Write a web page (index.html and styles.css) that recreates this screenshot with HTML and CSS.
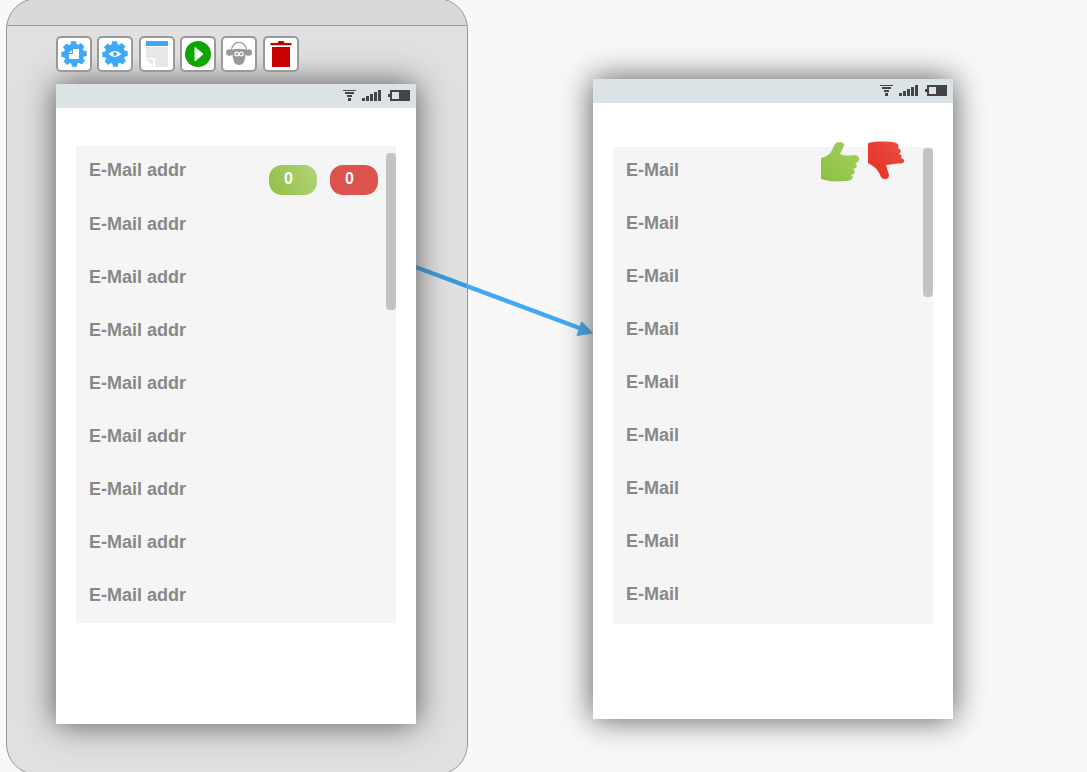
FILE: index.html
```html
<!DOCTYPE html>
<html lang="en">
<head>
<meta charset="utf-8">
<title>Screen flow editor</title>
<link rel="stylesheet" href="styles.css">
</head>
<body>
<svg width="0" height="0" class="defs">
  <defs>
    <linearGradient id="leaf" x1="0" y1="1" x2="1" y2="0"><stop offset="0" stop-color="#8cc044"/><stop offset="1" stop-color="#a2d05c"/></linearGradient>
    <linearGradient id="coral" x1="0" y1="1" x2="1" y2="0"><stop offset="0" stop-color="#e82c20"/><stop offset="1" stop-color="#ea5044"/></linearGradient>
    <symbol id="gear" viewBox="-13 -13 26 26">
      <circle r="10.2"/>
      <path d="M-3-12.7H2L3-8H-3.5z"/><path d="M-3-12.7H2L3-8H-3.5z" transform="rotate(45)"/><path d="M-3-12.7H2L3-8H-3.5z" transform="rotate(90)"/><path d="M-3-12.7H2L3-8H-3.5z" transform="rotate(135)"/><path d="M-3-12.7H2L3-8H-3.5z" transform="rotate(180)"/><path d="M-3-12.7H2L3-8H-3.5z" transform="rotate(225)"/><path d="M-3-12.7H2L3-8H-3.5z" transform="rotate(270)"/><path d="M-3-12.7H2L3-8H-3.5z" transform="rotate(315)"/>
    </symbol>
    <symbol id="status" viewBox="0 0 68 12">
      <path d="M0 0h13v1H0zM2 2h9v2H2zM4 5h5v2H4zM5 8h3v3H5z"/>
      <path d="M19 8h3v3h-3zM23 6h3v5h-3zM27 4h3v7h-3zM31 2h3v9h-3zM35 0h3v11h-3z"/>
      <path fill-rule="evenodd" d="M47 0h20v11H47V7h-2V4h2zM49 2v7h7V2z"/>
    </symbol>
  </defs>
</svg>
<main class="canvas">
  <svg class="link" width="1087" height="772">
    <path d="M410 265L582 329" stroke="#3fa9f5" stroke-width="4.400"/>
    <path d="M593.500 333.500L581.500 321L576.500 336z" fill="#3fa9f5"/>
  </svg>

  <section class="device">
    <div class="device-head"></div>
  </section>

  <article class="phone phone-source">
    <header class="status"><svg width="68" height="12"><use href="#status" width="68" height="12"/></svg></header>
    <div class="list">
      <ul>
        <li>E-Mail addr</li><li>E-Mail addr</li><li>E-Mail addr</li><li>E-Mail addr</li><li>E-Mail addr</li><li>E-Mail addr</li><li>E-Mail addr</li><li>E-Mail addr</li><li>E-Mail addr</li>
      </ul>
      <div class="votes"><span class="vote up">0</span><span class="vote down">0</span></div>
      <div class="scrollbar"></div>
    </div>
  </article>

  <nav class="toolbar">
    <button class="tool"><svg width="28" height="28" viewBox="-14 -14 28 28"><use href="#gear" x="-13" y="-13" width="26" height="26" fill="#3fa9f5"/><path d="M-1-5H5V5H-5V0H-1z" fill="#fff"/><path d="M-5-1L-2-4V-1z" fill="#fff"/></svg></button>
    <button class="tool"><svg width="28" height="28" viewBox="-14 -14 28 28"><use href="#gear" x="-13" y="-13" width="26" height="26" fill="#3fa9f5"/><path d="M-6.500 0Q0-6 6.500 0Q0 6-6.500 0z" fill="#fff"/><circle r="1.900" fill="#3fa9f5"/></svg></button>
    <button class="tool tool-page"><svg width="28" height="28"><path d="M3 1h22v5H3z" fill="#3fa9f5"/><path d="M3 7h22v20H12V18H3zM3 19l7 7v-7z" fill="#e9e7e8"/></svg></button>
    <button class="tool"><svg width="28" height="28"><circle cx="14" cy="14" r="13" fill="#0ba800"/><path d="M11 7.500L19 14L11 21z" fill="#fff" stroke="#fff" stroke-linejoin="round"/></svg></button>
    <button class="tool"><svg width="28" height="28" fill="#999896"><path d="M6.500 11C6.500 -.5 21.500 -.5 21.500 11" fill="none" stroke="#999896" stroke-width="1.200"/><ellipse cx="4.500" cy="12.500" rx="3.500" ry="3.300"/><ellipse cx="23.500" cy="12.500" rx="3.500" ry="3.300"/><path d="M6 10Q14 7.500 22 10L20.500 15Q20 25 14 25T7.500 15z"/><g fill="#999896" stroke="#fff" stroke-width="1.200"><circle cx="11.700" cy="14" r="1.900"/><circle cx="16.300" cy="14" r="1.900"/></g></svg></button>
    <button class="tool tool-trash"><svg width="28" height="28" fill="#c80000"><path d="M3.500 3h7l1-2h5l1 2h7v2.200h-21zM5 7h18v20H5z"/></svg></button>
  </nav>

  <article class="phone phone-target">
    <header class="status"><svg width="68" height="12"><use href="#status" width="68" height="12"/></svg></header>
    <div class="list">
      <ul>
        <li>E-Mail</li><li>E-Mail</li><li>E-Mail</li><li>E-Mail</li><li>E-Mail</li><li>E-Mail</li><li>E-Mail</li><li>E-Mail</li><li>E-Mail</li>
      </ul>
      <svg class="thumbs" width="86" height="42">
        <path d="M1 17C6 16 9 14 11 11L15 3Q16 1 19 1Q25 1 24 5L20 13Q24 15 30 14.500L35 14Q40 15 39 19Q38 22 35 22Q38 24 36 27L33 28Q36 30 34 33L31 34Q34 35 32 38Q30 40 25 40Q13 41 7 39.500L1 38z" fill="url(#leaf)"/>
        <path d="M48 2.500C52 0 67 0 75 1.500Q80 3 78 7Q82 9 80 12L79 13Q83 14 81 17Q85 18 84 21Q83 23 78 22.500L66 24L69 34Q69 38 65 38Q62 38 61 36C59 31 57 28 53 25L48 22z" fill="url(#coral)"/>
      </svg>
      <div class="scrollbar"></div>
    </div>
  </article>
</main>
</body>
</html>
```
FILE: styles.css
```css
* { box-sizing: border-box; }
body { margin: 0; background: #f8f8f8; font-family: "Liberation Sans", Arial, sans-serif; }
.defs { position: absolute; }
.canvas { position: relative; width: 1087px; height: 772px; overflow: hidden; }
.link { position: absolute; top: 0; left: 0; }

.device {
  position: absolute; left: 6px; top: -2px; width: 462px; height: 777px;
  border: 1px solid #989898; border-radius: 31px;
  background: rgba(0, 0, 0, .095); overflow: hidden;
}
.device-head { height: 27px; background: rgba(0, 0, 0, .035); border-bottom: 1px solid #989898; }
.toolbar { position: absolute; left: 56px; top: 36px; display: flex; gap: 5px; }
.tool {
  width: 36px; height: 36px; padding: 0; border: 2px solid #999; border-radius: 5px;
  background: #fff; display: grid; place-items: center;
}
.tool svg { display: block; }
.tool-page, .tool-trash { margin-left: 1px; }

.phone { position: absolute; width: 360px; height: 640px; background: #fff; box-shadow: 0 0 30px #555; }
.phone-source { left: 56px; top: 84px; }
.phone-target { left: 593px; top: 79px; }
.status { height: 24px; padding: 6px 5px 0 0; display: flex; justify-content: flex-end; background: #dbe3e6; }
.status svg { fill: #444; }

.list { position: relative; margin: 38px 20px 0; height: 477px; background: #f5f5f5; }
.phone-target .list { margin-top: 44px; }
.list ul { margin: 0; padding: 0 13px; list-style: none; }
.list li { height: 53px; line-height: 48px; font-size: 18px; font-weight: bold; color: #888; }
.phone-source li:first-child { height: 54px; }
.phone-target li { line-height: 46px; }
.votes { position: absolute; top: 19px; left: 193px; display: flex; gap: 13px; }
.vote { width: 48px; height: 30px; padding-left: 15px; border-radius: 13px; color: #fff; font-size: 16px; font-weight: bold; line-height: 27px; }
.up { background: linear-gradient(65deg, #8fc043, #b3d47a); }
.down { background: #dc524d; }
.scrollbar { position: absolute; right: 0; top: 7px; width: 10px; height: 157px; border-radius: 4px; background: #c3c3c3; }
.phone-target .scrollbar { top: 1px; height: 149px; }
.thumbs { position: absolute; left: 207px; top: -6px; }
```
